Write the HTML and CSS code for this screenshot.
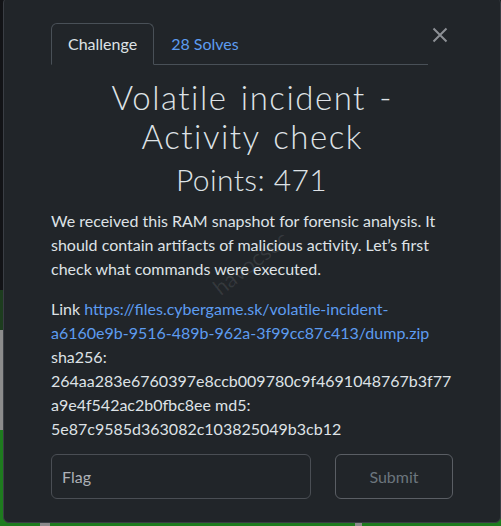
FILE: index.html
```html
<!DOCTYPE html>
<html lang="en">
<head>
<meta charset="utf-8">
<title>Volatile incident - Activity check</title>
<link rel="stylesheet" href="styles.css">
</head>
<body>
<div class="modal">
  <div class="modal-header">
    <ul class="tabs">
      <li class="tab active">Challenge</li>
      <li class="tab">28 Solves</li>
    </ul>
    <button class="close" aria-label="Close">
      <svg width="16" height="16" viewBox="0 0 16 16"><path d="M1.5 1.5L14.5 14.5M14.5 1.5L1.5 14.5" stroke="currentColor" stroke-width="2" fill="none"/></svg>
    </button>
  </div>
  <h1 class="title">Volatile incident -<br>Activity check</h1>
  <h3 class="points">Points: 471</h3>
  <div class="desc">
    <p>We received this RAM snapshot for forensic analysis. It should contain artifacts of malicious activity. Let’s first check what commands were executed.</p>
    <p>Link <a href="#">https://files.cybergame.sk/volatile-incident-a6160e9b-9516-489b-962a-3f99cc87c413/dump.zip</a> sha256: 264aa283e6760397e8ccb009780c9f4691048767b3f77a9e4f542ac2b0fbc8ee md5: 5e87c9585d363082c103825049b3cb12</p>
  </div>
  <form class="submit-row">
    <input class="flag" type="text" placeholder="Flag">
    <button class="submit" type="button" disabled>Submit</button>
  </form>
  <div class="watermark">havocsec</div>
</div>
</body>
</html>
```

FILE: styles.css
```css
html, body {
  margin: 0;
  height: 100%;
  overflow: hidden;
}
body {
  font-family: Lato, "Noto Sans", sans-serif;
  background:
    linear-gradient(to right, #1e7b1e 0 40px, #8a8a8a 40px 50px, #1e7b1e 50px 355px, #8a8a8a 355px 362px, #1e7b1e 362px) bottom left / 100% 3px no-repeat,
    linear-gradient(to bottom, #121316 0 290px, #1d3d1e 290px 330px, #8c8c8c 330px 430px, #1e7b1e 430px);
}
.modal {
  position: relative;
  box-sizing: border-box;
  width: 498px;
  margin: -3px 0 0 3px;
  padding: 25px 48px 23px 47px;
  background: #212529;
  border: 1px solid #3a3e44;
  border-radius: 6px;
  color: #dee2e6;
  overflow: hidden;
}
.modal-header {
  display: flex;
  align-items: flex-start;
}
.tabs {
  flex: 1;
  display: flex;
  list-style: none;
  margin: 0;
  padding: 0;
  border-bottom: 1px solid #495057;
}
.tab {
  padding: 8px 16px;
  margin-bottom: -1px;
  border: 1px solid transparent;
  border-top-left-radius: 6px;
  border-top-right-radius: 6px;
  font-size: 16px;
  line-height: 24px;
  color: #5d9cf0;
}
.tab.active {
  color: #dee2e6;
  background: #212529;
  border-color: #495057 #495057 #212529;
}
.close {
  width: 24px;
  height: 24px;
  padding: 4px;
  margin: 0;
  border: 0;
  background: transparent;
  color: #8d9095;
  display: flex;
}
.title {
  margin: 13px 0 5px;
  padding-left: 1.5px;
  text-align: center;
  font-size: 33px;
  line-height: 39px;
  font-weight: 300;
  letter-spacing: 1.5px;
  word-spacing: 3px;
}
.points {
  margin: 0 0 12px;
  text-align: center;
  font-size: 30px;
  line-height: 36px;
  font-weight: 300;
  letter-spacing: 0.4px;
}
.desc {
  font-size: 16px;
  line-height: 24px;
  overflow-wrap: anywhere;
}
.desc p {
  margin: 0 0 16px;
}
.desc p:last-child {
  margin-bottom: 13px;
}
.desc a {
  color: #5d9cf0;
  text-decoration: none;
}
.submit-row {
  display: grid;
  grid-template-columns: 260px 118px;
  column-gap: 24px;
  margin: 0;
}
.flag {
  box-sizing: border-box;
  height: 45px;
  padding: 0 10px;
  background: transparent;
  border: 1px solid #4a4e54;
  border-radius: 6px;
  font-family: inherit;
  font-size: 16px;
  color: #dee2e6;
}
.flag::placeholder {
  color: #adb1b7;
}
.submit {
  box-sizing: border-box;
  height: 45px;
  background: transparent;
  border: 1px solid #5a5e64;
  border-radius: 6px;
  font-family: inherit;
  font-size: 16px;
  color: #6c757d;
}
.watermark {
  position: absolute;
  left: 202px;
  top: 251px;
  font-size: 22px;
  color: rgba(255, 255, 255, 0.09);
  transform: rotate(-38deg);
  pointer-events: none;
}
```
